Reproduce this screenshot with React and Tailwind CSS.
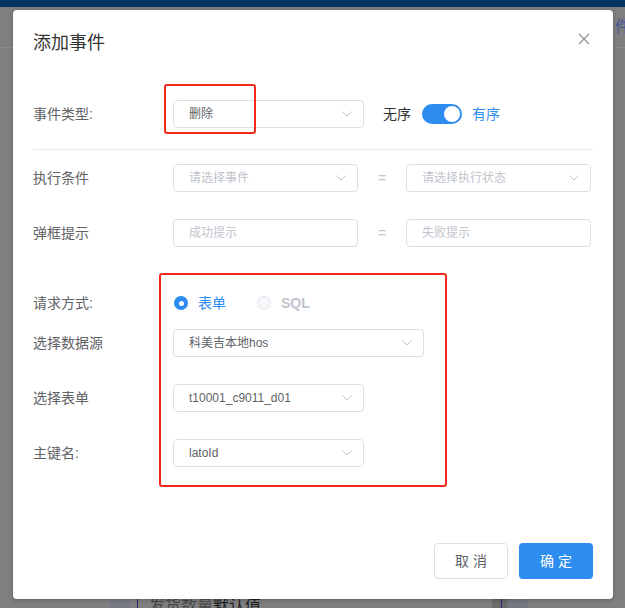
import React from "react";

function Chevron() {
  return (
    <svg width="10" height="6" viewBox="0 0 10 6" fill="none" className="shrink-0">
      <polyline points="0.5,0.5 5,5 9.5,0.5" stroke="#c0c4cc" strokeWidth="1" />
    </svg>
  );
}

function Select({ className, value, placeholder }) {
  return (
    <div
      className={
        "h-[28px] shrink-0 flex items-center justify-between pl-[15px] pr-[11px] border border-[#dcdfe6] rounded-[4px] bg-white text-[12px] " +
        className
      }
    >
      {value ? (
        <span className="text-[#606266]">{value}</span>
      ) : (
        <span className="text-[#c0c4cc]">{placeholder}</span>
      )}
      <Chevron />
    </div>
  );
}

function Input({ placeholder }) {
  return (
    <div className="h-[28px] w-[185px] shrink-0 flex items-center pl-[15px] border border-[#dcdfe6] rounded-[4px] bg-white text-[12px] text-[#c0c4cc]">
      {placeholder}
    </div>
  );
}

function Label({ children }) {
  return <div className="w-[140px] shrink-0 text-[14px] text-[#606266]">{children}</div>;
}

export default function App() {
  return (
    <div className="relative w-[625px] h-[608px] overflow-hidden bg-[#7f7f7f] flex flex-col font-['Liberation_Sans','Noto_Sans_CJK_SC',sans-serif]">
      {/* background page */}
      <div className="h-[7px] shrink-0 bg-[#03335f]" />
      <div className="h-[41px] shrink-0 border-b border-[#8b8b8b] flex items-center justify-end overflow-hidden">
        <span className="shrink-0 mr-[-6px] text-[16px] leading-[16px] text-[#46569a]">件</span>
      </div>
      <div className="flex-1" />
      <div className="h-[10px] shrink-0 flex items-stretch overflow-hidden pl-[110px]">
        <div className="w-[20px] bg-[#777b84]" />
        <div className="w-[7px]" />
        <div className="w-px bg-[#26237a]" />
        <div className="w-[11px]" />
        <div className="w-[343px] overflow-hidden whitespace-nowrap text-[16px] leading-[16px] text-[#4a4a4a]">
          发货数量<span className="text-[#1c1c1c]">默认值</span>
        </div>
        <div className="w-[9px] bg-[#6b6b6b]" />
        <div className="w-px bg-[#26237a]" />
        <div className="w-[5px] bg-[#6a6a6a]" />
        <div className="w-[21px] bg-[#747881]" />
      </div>

      {/* modal */}
      <div className="absolute left-[13px] top-[10px] w-[600px] h-[589px] bg-white rounded-[4px] shadow-[0_1px_4px_rgba(0,0,0,0.25)] flex flex-col">
        <div className="h-[66px] shrink-0 flex items-center justify-between pl-[20px] pr-[23px]">
          <span className="text-[18px] text-[#333333]">添加事件</span>
          <svg width="12" height="12" viewBox="0 0 12 12" fill="none" className="-mt-[8px]">
            <path d="M1 1L11 11M11 1L1 11" stroke="#909399" strokeWidth="1.2" />
          </svg>
        </div>

        <div className="px-[20px] flex flex-col">
          <div className="mt-[24px] h-[28px] flex items-center">
            <Label>事件类型:</Label>
            <Select className="w-[191px]" value="删除" />
            <span className="ml-[19px] text-[14px] text-[#303133]">无序</span>
            <div className="ml-[11px] w-[40px] h-[20px] rounded-full bg-[#2d8cf0] flex items-center justify-end pr-[2px]">
              <div className="w-[16px] h-[16px] rounded-full bg-white" />
            </div>
            <span className="ml-[10px] text-[14px] text-[#2d8cf0]">有序</span>
          </div>

          <div className="mt-[21px] h-px bg-[#e8eaec]" />

          <div className="mt-[14px] h-[28px] flex items-center">
            <Label>执行条件</Label>
            <Select className="w-[185px]" placeholder="请选择事件" />
            <div className="w-[48px] text-center text-[14px] text-[#c0c4cc]">=</div>
            <Select className="w-[185px]" placeholder="请选择执行状态" />
          </div>

          <div className="mt-[27px] h-[28px] flex items-center">
            <Label>弹框提示</Label>
            <Input placeholder="成功提示" />
            <div className="w-[48px] text-center text-[14px] text-[#c0c4cc]">=</div>
            <Input placeholder="失败提示" />
          </div>

          <div className="mt-[42px] h-[28px] flex items-center">
            <Label>请求方式:</Label>
            <div className="ml-[1px] w-[14px] h-[14px] rounded-full bg-[#2d8cf0] flex items-center justify-center">
              <div className="w-[5px] h-[5px] rounded-full bg-white" />
            </div>
            <span className="ml-[10px] text-[14px] text-[#2d8cf0]">表单</span>
            <div className="ml-[31px] w-[14px] h-[14px] rounded-full border border-[#e4e7ed] bg-[#f5f7fa]" />
            <span className="ml-[10px] text-[14px] font-bold text-[#c0c4cc]">SQL</span>
          </div>

          <div className="mt-[12px] h-[28px] flex items-center">
            <Label>选择数据源</Label>
            <Select className="w-[251px]" value="科美吉本地hos" />
          </div>

          <div className="mt-[27px] h-[28px] flex items-center">
            <Label>选择表单</Label>
            <Select className="w-[191px]" value="t10001_c9011_d01" />
          </div>

          <div className="mt-[27px] h-[28px] flex items-center">
            <Label>主键名:</Label>
            <Select className="w-[191px]" value="latoId" />
          </div>
        </div>

        <div className="mt-auto pb-[20px] pr-[20px] flex justify-end gap-[11px]">
          <button className="w-[74px] h-[36px] rounded-[4px] border border-[#dcdfe6] bg-white text-[14px] text-[#606266]">
            取 消
          </button>
          <button className="w-[74px] h-[36px] rounded-[4px] bg-[#2d8cf0] text-[14px] text-white">
            确 定
          </button>
        </div>

        {/* annotation boxes */}
        <div className="absolute left-[151px] top-[74px] w-[92px] h-[50px] border-2 border-[#f5281c] rounded-[3px]" />
        <div className="absolute left-[146px] top-[263px] w-[288px] h-[214px] border-2 border-[#f5281c] rounded-[3px]" />
      </div>
    </div>
  );
}
